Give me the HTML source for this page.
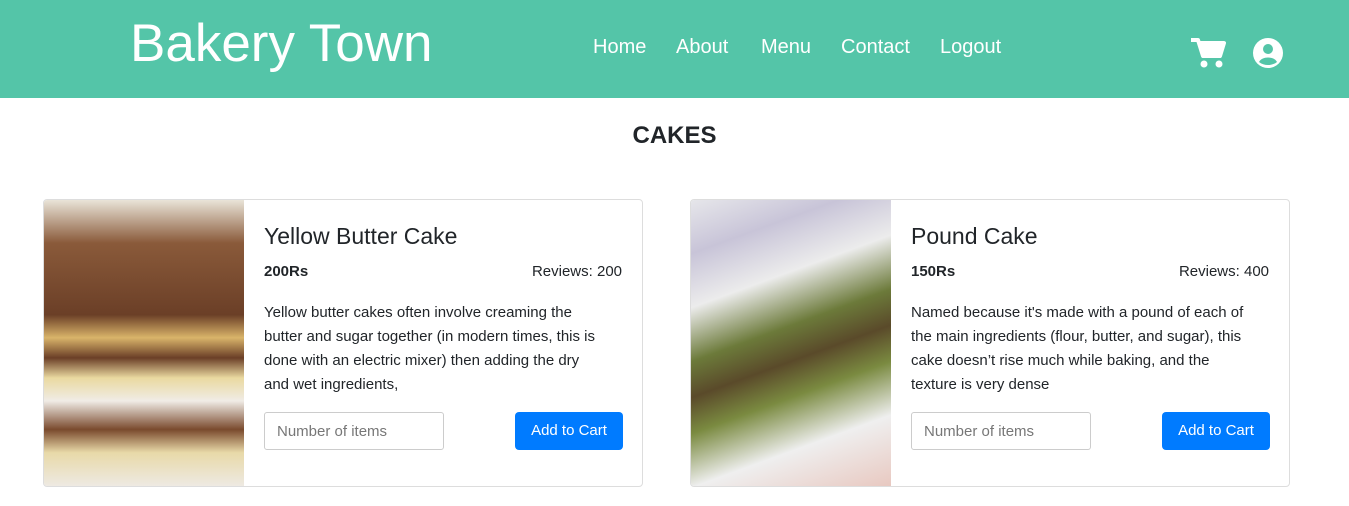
<!DOCTYPE html>
<html><head><style>
*{box-sizing:border-box;margin:0;padding:0}
body{width:1349px;height:506px;background:#fff;font-family:"Liberation Sans",sans-serif;color:#212529;position:relative;overflow:hidden}
.hdr{position:absolute;left:0;top:0;width:1349px;height:98px;background:#54c5a8}
.brand{position:absolute;left:130px;top:13px;font-size:53px;color:#fff}
.nav{position:absolute;top:36px;font-size:20px;color:#fff}
h2{position:absolute;top:122px;width:100%;text-align:center;font-size:24px;font-weight:bold}
.card{position:absolute;top:199px;width:600px;height:288px;border:1px solid #ddd;border-radius:4px;overflow:hidden}
.img{position:absolute;left:0;top:0;width:200px;height:287px}
.t{position:absolute;left:220px;top:23px;font-size:23px}
.p{position:absolute;left:220px;top:63px;font-size:15px;font-weight:bold}
.r{position:absolute;right:20px;top:63px;font-size:15px}
.d{position:absolute;left:220px;top:101px;font-size:15px;line-height:24px;white-space:nowrap}
.in{position:absolute;left:220px;top:212px;width:180px;height:38px;border:1px solid #ccc;border-radius:3px;font-size:15px;color:#777;padding:10px 12px}
.b{position:absolute;left:471px;top:212px;width:108px;height:38px;background:#007bff;border-radius:4px;color:#fff;font-size:15px;text-align:center;line-height:38px}
</style></head><body>
<div class="hdr">
<div class="brand">Bakery Town</div>
<div class="nav" style="left:593px">Home</div>
<div class="nav" style="left:676px">About</div>
<div class="nav" style="left:761px">Menu</div>
<div class="nav" style="left:841px">Contact</div>
<div class="nav" style="left:940px">Logout</div>
<svg style="position:absolute;left:1190px;top:37px" width="36" height="32" viewBox="0 0 36 32"><path d="M1 3h7l5 16h17l4-13H10" fill="none" stroke="#fff" stroke-width="4" stroke-linejoin="round"/><path d="M10 6h24l-4 13H13z" fill="#fff"/><circle cx="14" cy="27" r="3.5" fill="#fff"/><circle cx="29" cy="27" r="3.5" fill="#fff"/></svg>
<svg style="position:absolute;left:1252px;top:37px" width="32" height="32" viewBox="0 0 32 32"><circle cx="16" cy="16" r="15" fill="#fff"/><circle cx="16" cy="12" r="5" fill="#54c5a8"/><path d="M7 25c3-6 15-6 18 0c-5 4-13 4-18 0z" fill="#54c5a8"/></svg>
</div>
<h2>CAKES</h2>
<div class="card" style="left:43px">
<div class="img" style="background:linear-gradient(180deg,#e9e4d8 0%,#8a5a3a 15%,#6b3f27 40%,#d9b46a 48%,#6b3f27 55%,#ead9a0 62%,#f0ece6 70%,#7a4a2d 80%,#e8d9a8 88%,#eeeae4 100%)"></div>
<div class="t">Yellow Butter Cake</div>
<div class="p">200Rs</div><div class="r">Reviews: 200</div>
<div class="d">Yellow butter cakes often involve creaming the<br>butter and sugar together (in modern times, this is<br>done with an electric mixer) then adding the dry<br>and wet ingredients,</div>
<div class="in">Number of items</div><div class="b">Add to Cart</div>
</div>
<div class="card" style="left:690px">
<div class="img" style="background:linear-gradient(160deg,#e6e6ea 0%,#c8c4d8 15%,#ececec 30%,#6c7a3a 45%,#5a4a2a 55%,#7a8a40 65%,#efefef 80%,#e8c8c0 100%)"></div>
<div class="t">Pound Cake</div>
<div class="p">150Rs</div><div class="r">Reviews: 400</div>
<div class="d">Named because it's made with a pound of each of<br>the main ingredients (flour, butter, and sugar), this<br>cake doesn’t rise much while baking, and the<br>texture is very dense</div>
<div class="in">Number of items</div><div class="b">Add to Cart</div>
</div>
</body></html>
